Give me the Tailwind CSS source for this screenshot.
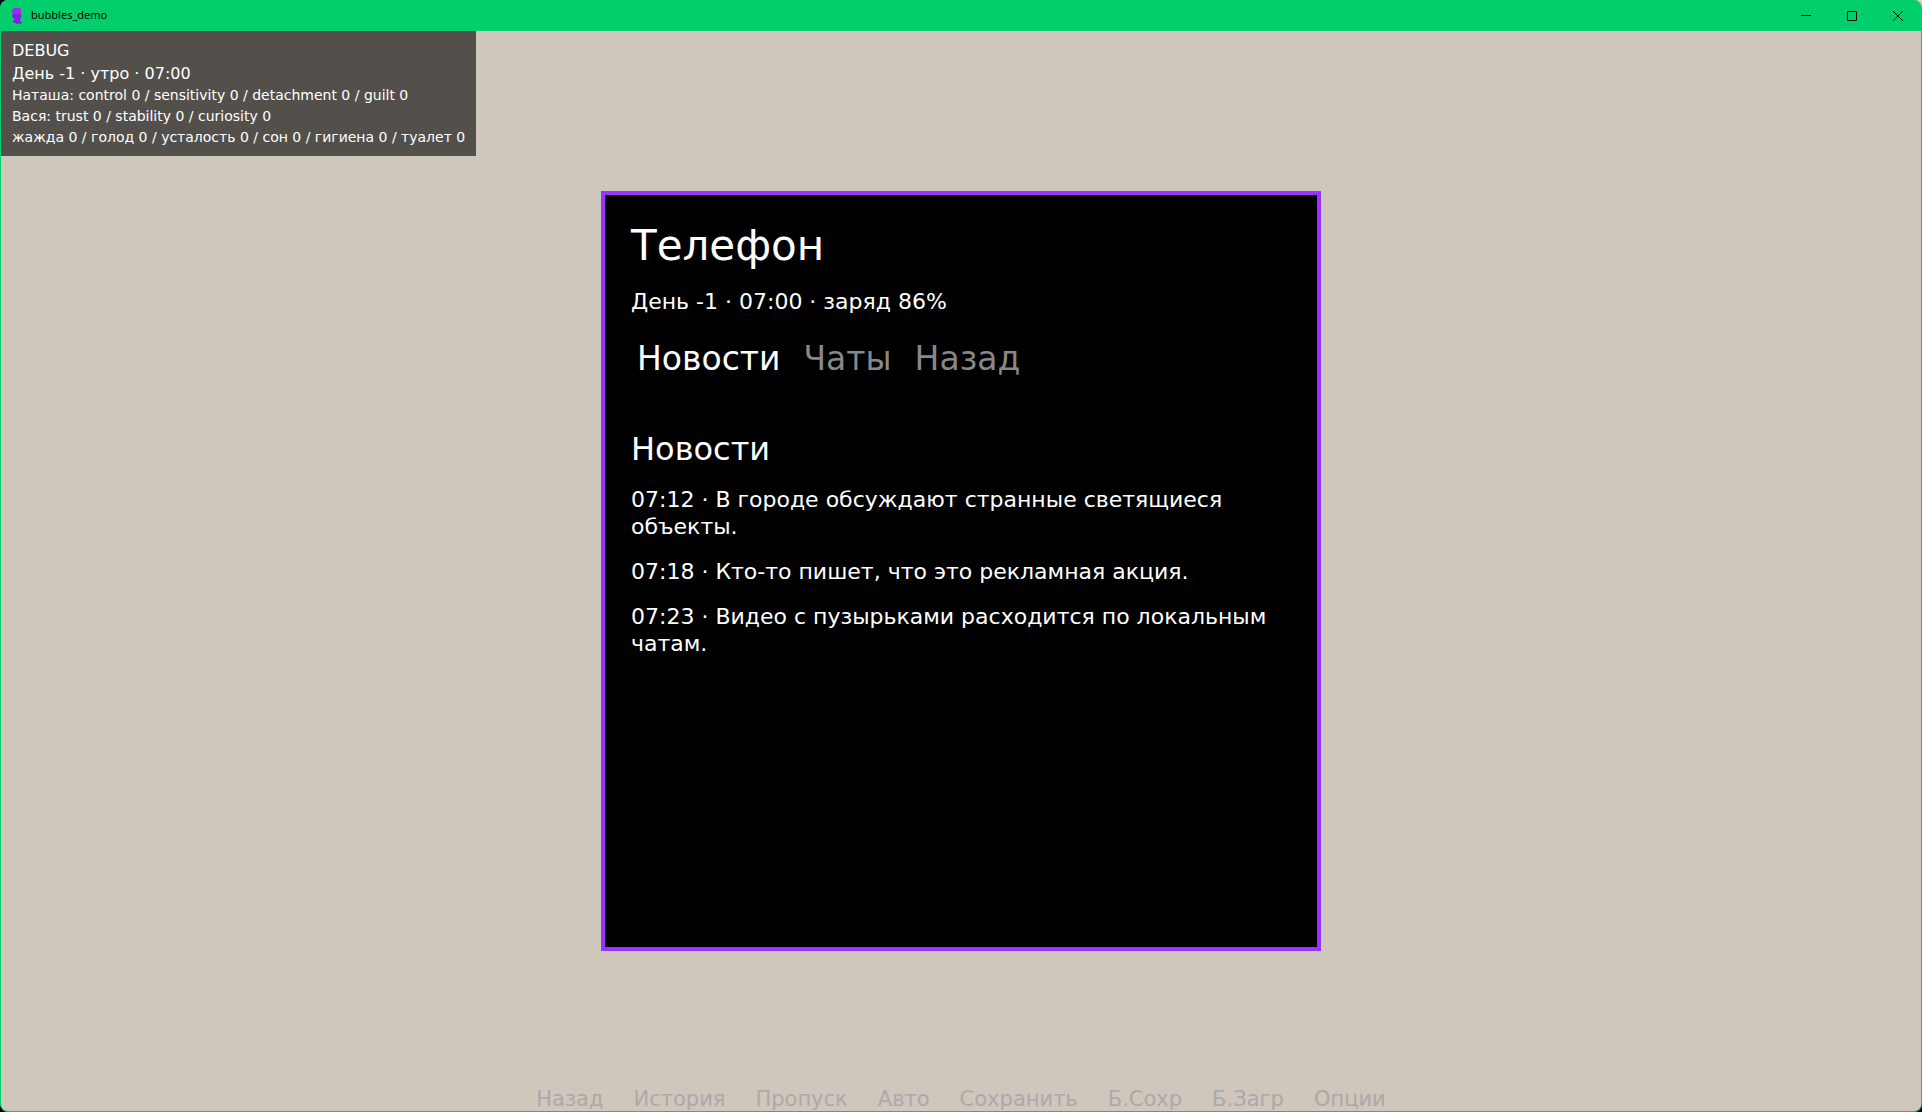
<!DOCTYPE html>
<html lang="ru">
<head>
<meta charset="utf-8">
<title>bubbles_demo</title>
<script src="https://cdn.jsdelivr.net/npm/@tailwindcss/browser@4"></script>
</head>
<body class="h-screen overflow-hidden bg-black bg-[linear-gradient(to_bottom_left,#e8d3b0_5%,#000_5%)] font-['DejaVu_Sans',sans-serif] text-white">
<div class="flex h-full flex-col overflow-hidden rounded-lg border border-t-0 border-[#00cf6b] bg-[#cfc6bc]">
  <header class="flex h-[31px] shrink-0 items-center bg-[#00cf6b] pl-2 font-['Noto_Sans',sans-serif] text-[11px] text-black">
    <svg class="mr-[6px] h-4 w-4" viewBox="0 0 16 16" fill="none" aria-hidden="true">
      <path d="M3 3 5 0h5l2 2v8l-1 1v2l2 1v1h-1v1h-1l-1-1-1 1H8l-1-1H5v-1H4v-1l2-2-2-1V9L3 8V7l1-1z" fill="#851ceb"/>
      <path d="M3 3 5 0h5l2 2v4H4z" fill="#9a2bf5"/>
    </svg>
    <span>bubbles_demo</span>
    <div class="ml-auto flex h-full">
      <button class="flex w-[46px] items-center justify-center" aria-label="Свернуть"><svg class="size-[10px]" viewBox="0 0 10 10" stroke="#000" aria-hidden="true"><path d="M0 4.500h10"/></svg></button>
      <button class="flex w-[46px] items-center justify-center" aria-label="Развернуть"><svg class="size-[10px]" viewBox="0 0 10 10" fill="none" stroke="#000" aria-hidden="true"><rect x=".5" y=".5" width="9" height="9" rx=".5"/></svg></button>
      <button class="flex w-[46px] items-center justify-center" aria-label="Закрыть"><svg class="size-[10px]" viewBox="0 0 10 10" stroke="#000" aria-hidden="true"><path d="m0 0 10 10M10 0 0 10"/></svg></button>
    </div>
  </header>
  <main class="relative flex min-h-0 grow items-center justify-center">
    <aside class="absolute top-0 left-0 bg-[#53504b] px-[11px] py-2">
      <p class="text-base leading-[23px]">DEBUG</p>
      <p class="text-base leading-[23px]">День -1 · утро · 07:00</p>
      <p class="text-sm leading-[21px]">Наташа: control 0 / sensitivity 0 / detachment 0 / guilt 0</p>
      <p class="text-sm leading-[21px]">Вася: trust 0 / stability 0 / curiosity 0</p>
      <p class="text-sm leading-[21px]">жажда 0 / голод 0 / усталость 0 / сон 0 / гигиена 0 / туалет 0</p>
    </aside>
    <section class="h-[760px] w-[720px] border-4 border-[#9933ff] bg-black p-[26px]">
      <h1 class="text-[42px] leading-[50px]">Телефон</h1>
      <p class="mt-[17px] text-[22px] leading-[27px]">День -1 · 07:00 · заряд 86%</p>
      <nav class="mt-6 flex gap-[23px] pl-[6px] text-[33px] leading-10 text-[#888]">
        <button class="text-white">Новости</button>
        <button>Чаты</button>
        <button>Назад</button>
      </nav>
      <h2 class="mt-[51px] text-[32px] leading-[38px]">Новости</h2>
      <div class="mt-[18px] flex flex-col gap-[18px] text-[22px] leading-[27px]">
        <p>07:12 · В городе обсуждают странные светящиеся объекты.</p>
        <p>07:18 · Кто-то пишет, что это рекламная акция.</p>
        <p>07:23 · Видео с пузырьками расходится по локальным чатам.</p>
      </div>
    </section>
    <nav class="absolute inset-x-0 bottom-0 flex justify-center gap-[30px] text-[21px] leading-6 text-[#aaa]">
      <button>Назад</button>
      <button>История</button>
      <button>Пропуск</button>
      <button>Авто</button>
      <button>Сохранить</button>
      <button>Б.Сохр</button>
      <button>Б.Загр</button>
      <button>Опции</button>
    </nav>
  </main>
</div>
</body>
</html>
